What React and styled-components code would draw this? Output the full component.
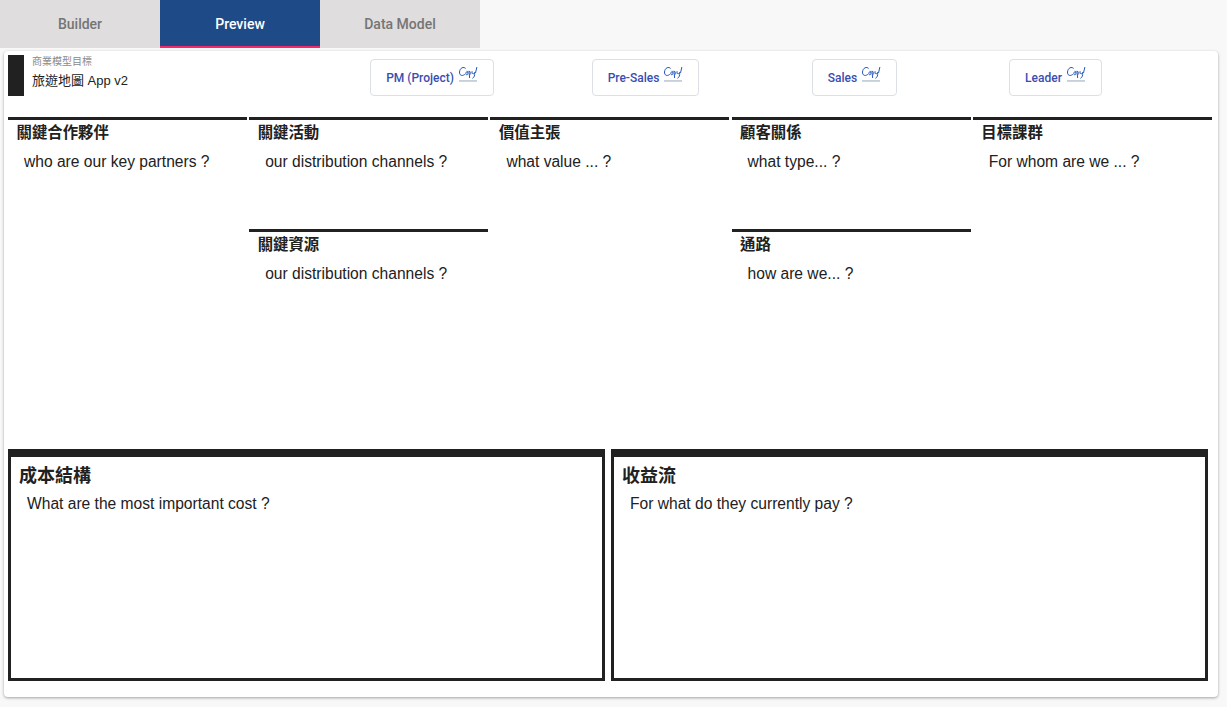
import styled, { createGlobalStyle } from "styled-components";

const GlobalStyle = createGlobalStyle`
  html, body {
    margin: 0;
    padding: 0;
    background: #f8f8f8;
    font-family: "Liberation Sans", "Noto Sans CJK TC", sans-serif;
    color: #212121;
  }
`;

const Page = styled.div`
  width: 1227px;
  height: 707px;
  overflow: hidden;
`;

const TabBar = styled.div`
  display: flex;
  height: 48px;
`;

const Tab = styled.div`
  width: 160px;
  box-sizing: border-box;
  display: flex;
  align-items: center;
  justify-content: center;
  font-family: Roboto, sans-serif;
  font-size: 14px;
  font-weight: 500;
  padding-top: 2px;
  color: ${({ $active }) => ($active ? "#fff" : "#757575")};
  background: ${({ $active }) => ($active ? "#1e4a87" : "#dfdddd")};
  border-bottom: 2px solid ${({ $active }) => ($active ? "#f5286c" : "#dfdddd")};
`;

const Card = styled.main`
  margin: 3px 9px 0 4px;
  height: 646px;
  box-sizing: border-box;
  padding: 4px 4px 0;
  background: #fff;
  border-radius: 4px;
  box-shadow: 0 1px 3px rgba(0, 0, 0, 0.35);
`;

const Header = styled.header`
  display: flex;
  align-items: flex-start;
  height: 41px;
`;

const Marker = styled.div`
  width: 16px;
  height: 41px;
  background: #212121;
  margin-right: 8px;
`;

const TitleBlock = styled.div`
  width: 338px;
`;

const Overline = styled.div`
  font-size: 10px;
  line-height: 12px;
  margin-top: 1px;
  color: #8a8a8a;
`;

const ProjectName = styled.div`
  font-size: 13px;
  line-height: 18px;
  margin-top: 4px;
  color: #212121;
`;

const RoleButton = styled.div`
  box-sizing: border-box;
  width: ${({ $width }) => $width}px;
  margin-left: ${({ $offset }) => $offset}px;
  margin-top: 4px;
  height: 37px;
  display: flex;
  align-items: center;
  justify-content: center;
  gap: 5px;
  border: 1px solid #dcdfe6;
  border-radius: 4px;
  font-family: Roboto, sans-serif;
  font-size: 12px;
  font-weight: 500;
  color: #3a4db0;
  span {
    margin-top: 1px;
  }
`;

const CopyMark = () => (
  <svg width="19" height="16" viewBox="0 0 19 16" style={{ marginTop: -5 }}>
    <path
      d="M6.4 1.2C4.8-.6.9.6.5 5c-.2 3.2 2.4 4.6 5 2.6M8.2 4.4C6.6 4.6 6.2 7.8 7.8 7.8c1.5 0 1.6-3 .4-3.4M10 4.2l.6 6.4M10.2 4.6c1.6-.8 2.6 2.4.8 3M13 4.6c-.2 2.2 1.4 3.4 2.6.8.4 2.8-.4 5.2-1.8 5.8M17.8.4l-1.2 5.2"
      fill="none"
      stroke="#2457bd"
      strokeWidth="1"
      strokeLinecap="round"
    />
    <rect x="0" y="13.2" width="18" height="1.5" fill="#b8c5d3" />
  </svg>
);

const Canvas = styled.section`
  display: grid;
  grid-template-columns: repeat(5, 239px);
  column-gap: 2.2px;
  grid-template-rows: 112px 220px;
  margin-top: 21px;
`;

const Block = styled.div`
  border-top: 3px solid #212121;
  grid-row: ${({ $tall }) => ($tall ? "1 / span 2" : "auto")};
  grid-column: ${({ $col }) => $col};
`;

const BlockTitle = styled.h3`
  margin: 2px 0 0;
  padding-left: 8.5px;
  font-size: 15.4px;
  font-weight: 700;
  line-height: 22px;
  color: #212121;
`;

const Question = styled.p`
  margin: ${({ $tight }) => ($tight ? "7px" : "9px")} 0 0;
  padding-left: 16px;
  font-size: 15.6px;
  line-height: 18px;
  color: #212121;
`;

const BottomRow = styled.section`
  display: flex;
  gap: 6px;
`;

const CostBox = styled.div`
  box-sizing: border-box;
  width: 597px;
  height: 232px;
  border: 3px solid #212121;
  border-top-width: 8px;
`;

const CostTitle = styled.h2`
  margin: 0;
  padding: 7px 0 0 8px;
  font-size: 18px;
  font-weight: 700;
  line-height: 24px;
  color: #212121;
`;

const roles = [
  { name: "PM (Project)", width: 124, offset: 0 },
  { name: "Pre-Sales", width: 107, offset: 98 },
  { name: "Sales", width: 85, offset: 113 },
  { name: "Leader", width: 93, offset: 112 },
];

const blocks = [
  { title: "關鍵合作夥伴", text: "who are our key partners ?", col: 1, tall: true },
  { title: "關鍵活動", text: "our distribution channels ?", col: 2 },
  { title: "價值主張", text: "what value ... ?", col: 3, tall: true },
  { title: "顧客關係", text: "what type... ?", col: 4 },
  { title: "目標課群", text: "For whom are we ... ?", col: 5, tall: true },
  { title: "關鍵資源", text: "our distribution channels ?", col: 2 },
  { title: "通路", text: "how are we... ?", col: 4 },
];

const App = () => {
  return (
    <Page>
      <GlobalStyle />
      <TabBar>
        <Tab>Builder</Tab>
        <Tab $active>Preview</Tab>
        <Tab>Data Model</Tab>
      </TabBar>
      <Card>
        <Header>
          <Marker />
          <TitleBlock>
            <Overline>商業模型目標</Overline>
            <ProjectName>旅遊地圖 App v2</ProjectName>
          </TitleBlock>
          {roles.map((role) => (
            <RoleButton key={role.name} $width={role.width} $offset={role.offset}>
              <span>{role.name}</span>
              <CopyMark />
            </RoleButton>
          ))}
        </Header>
        <Canvas>
          {blocks.map((block) => (
            <Block key={block.title} $col={block.col} $tall={block.tall}>
              <BlockTitle>{block.title}</BlockTitle>
              <Question>{block.text}</Question>
            </Block>
          ))}
        </Canvas>
        <BottomRow>
          <CostBox>
            <CostTitle>成本結構</CostTitle>
            <Question $tight>What are the most important cost ?</Question>
          </CostBox>
          <CostBox>
            <CostTitle>收益流</CostTitle>
            <Question $tight>For what do they currently pay ?</Question>
          </CostBox>
        </BottomRow>
      </Card>
    </Page>
  );
};

export default App;
